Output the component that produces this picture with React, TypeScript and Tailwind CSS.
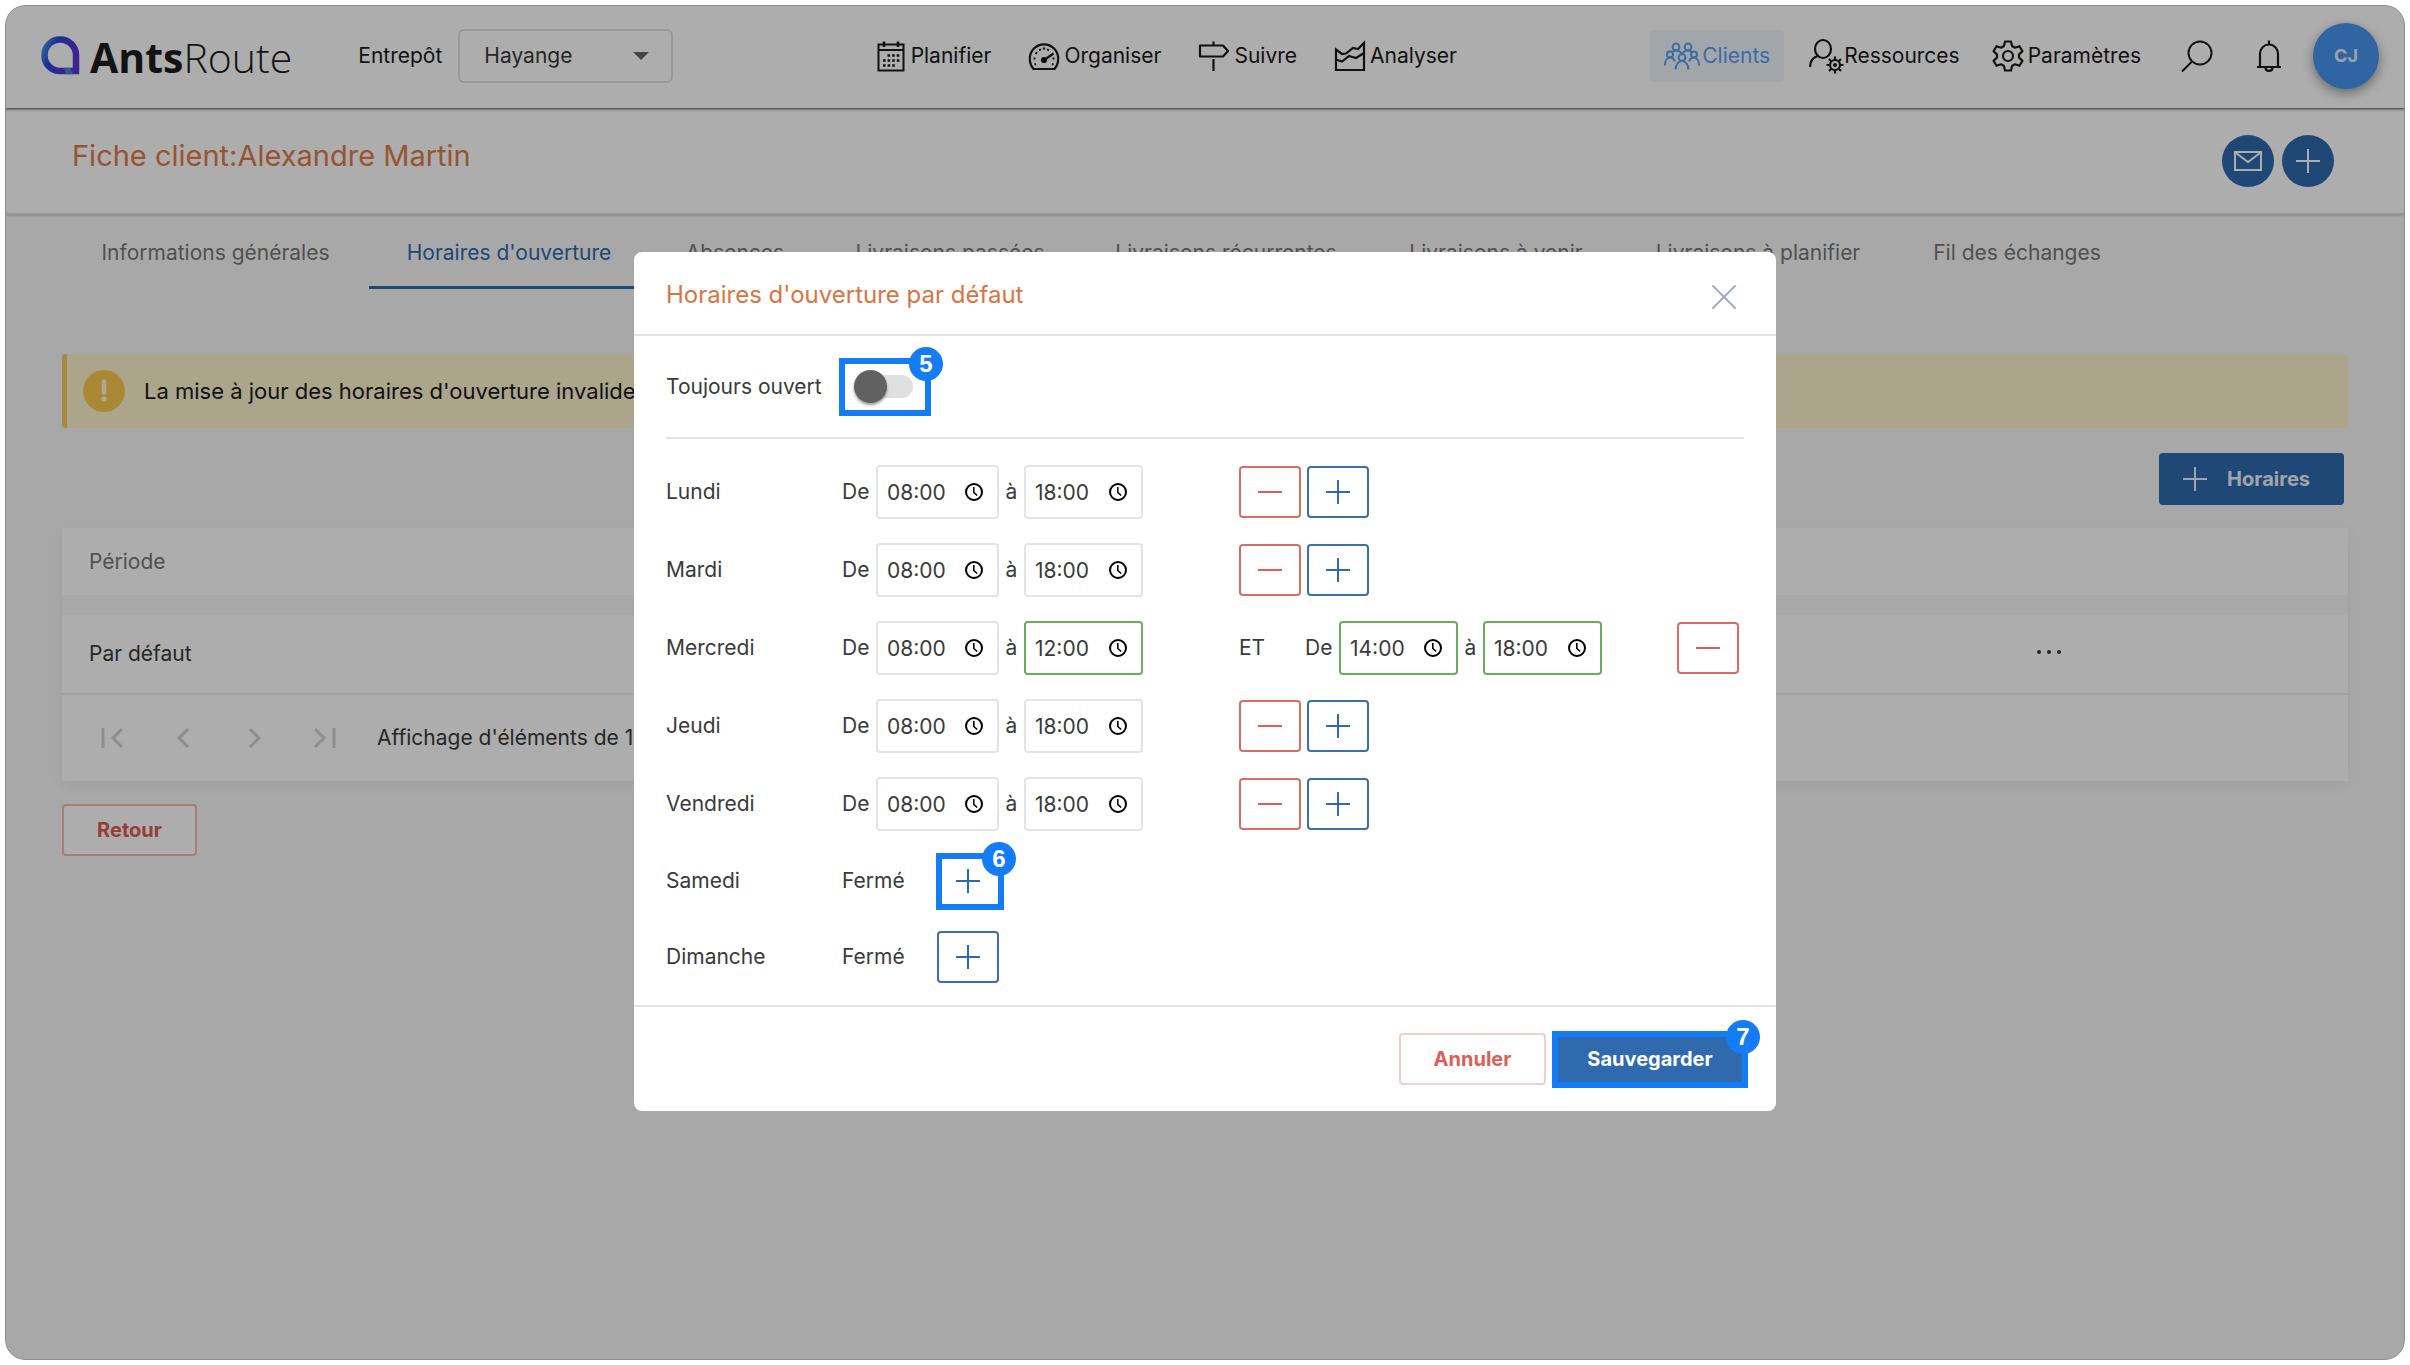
import { useState } from "react";
import type { ReactNode } from "react";
import clsx from "clsx";

type Slot = { from: string; to: string; fromEdited?: boolean; toEdited?: boolean };
type Day = { name: string; slots: Slot[] };

const DEFAULT_DAYS: Day[] = [
  { name: "Lundi", slots: [{ from: "08:00", to: "18:00" }] },
  { name: "Mardi", slots: [{ from: "08:00", to: "18:00" }] },
  {
    name: "Mercredi",
    slots: [
      { from: "08:00", to: "12:00", toEdited: true },
      { from: "14:00", to: "18:00", fromEdited: true, toEdited: true },
    ],
  },
  { name: "Jeudi", slots: [{ from: "08:00", to: "18:00" }] },
  { name: "Vendredi", slots: [{ from: "08:00", to: "18:00" }] },
  { name: "Samedi", slots: [] },
  { name: "Dimanche", slots: [] },
];

const TABS = [
  { label: "Informations générales", width: "w-[307px]" },
  { label: "Horaires d'ouverture", width: "w-[280px]" },
  { label: "Absences", width: "w-[172px]" },
  { label: "Livraisons passées", width: "w-[258px]" },
  { label: "Livraisons récurrentes", width: "w-[294px]" },
  { label: "Livraisons à venir", width: "w-[246px]" },
  { label: "Livraisons à planifier", width: "w-[278px]" },
  { label: "Fil des échanges", width: "w-[240px]" },
];

/* ---------- icons ---------- */

function Svg({ className, box = 32, sw = 2, children }: { className: string; box?: number; sw?: number; children: ReactNode }) {
  return (
    <svg viewBox={`0 0 ${box} ${box}`} className={clsx("shrink-0", className)} fill="none" stroke="currentColor" strokeWidth={sw} aria-hidden="true">
      {children}
    </svg>
  );
}

const PlusIcon = () => <Svg className="size-6" box={24}><path d="M12 0v24M0 12h24" /></Svg>;

const MinusIcon = () => <Svg className="size-6" box={24}><path d="M0 12h24" /></Svg>;

const CalendarIcon = () => (
  <Svg className="size-8">
    <path d="M3.500 4.500h25v26h-25zM3.500 10h25" />
    <path d="M9 1.500v5.500M23 1.500v5.500" strokeWidth="2.600" />
    <path d="M12.500 15.500h12M8 20.500h16.500M8 25.500h12" strokeWidth="2.600" strokeDasharray="2.600 2" />
  </Svg>
);

const GaugeIcon = () => (
  <Svg className="size-8" sw={2.2}>
    <path d="M5.500 29C2.500 25.500 1.800 22 1.800 18.500a14.200 14.200 0 0 1 28.400 0c0 3.500-.700 7-3.700 10.500z" strokeLinejoin="round" />
    <path d="M6.500 24.500 8 24M5.500 18.500h2M7.500 12.500l1.600 1M11.500 9l1 1.600M16 7.500v2M20.500 9l-1 1.600M26.500 18.500h-2M25.500 24.500 24 24" />
    <path d="m16 20 9.500-6.500" strokeWidth="2.400" />
    <circle cx="16" cy="20" r="2" fill="currentColor" />
  </Svg>
);

const SignIcon = () => (
  <Svg className="size-8" sw={2.2}>
    <path d="M2 5.500h23l5 5.500-5 5.500H2zM15.500 1.500v4M15.500 19V31" strokeLinejoin="round" />
  </Svg>
);

// stacked area chart: an upper line closing the frame and a second one across it
const ChartIcon = () => (
  <Svg className="size-8" sw={2.2}>
    <path d="M2 9.500V30h28V3l-6 6-5-1-7 5.500-4 .500zM2 19.500l6 2 7-5.500 7 2 8-5" />
  </Svg>
);

const ClientsIcon = () => (
  <svg viewBox="0 0 36 28" className="h-7 w-9 shrink-0" fill="none" stroke="currentColor" strokeWidth="2" aria-hidden="true">
    <circle cx="12" cy="5" r="3.400" />
    <circle cx="24" cy="5" r="3.400" />
    <circle cx="6" cy="12.500" r="3" />
    <circle cx="30" cy="12.500" r="3" />
    <circle cx="18" cy="15.500" r="3.400" />
    <path d="M8 10c1-1 2.500-1.600 4-1.600 3 0 5 1.800 6 3.600 1-1.800 3-3.600 6-3.600 1.500 0 3 .600 4 1.600M1 23.500c0-4.500 2-8 5-8 2.500 0 4 1.500 5 4M35 23.500c0-4.500-2-8-5-8-2.500 0-4 1.500-5 4M11.500 27.500c.500-5 3-8.500 6.500-8.500s6 3.500 6.500 8.500" />
  </svg>
);

const ResourcesIcon = () => (
  <Svg className="size-9" box={36} sw={2.2}>
    <ellipse cx="15" cy="11" rx="8" ry="9" />
    <path d="M2 29c0-6 3-10 9-11.500" />
    <circle cx="27" cy="27" r="5" />
    <circle cx="27" cy="27" r="1" />
    <path d="M27 18.500V22M27 32v3.500M18.500 27H22M32 27h3.500M21 21l2.500 2.500M30.500 30.500 33 33M33 21l-2.500 2.500M23.500 30.500 21 33" />
  </Svg>
);

const GearIcon = () => (
  <Svg className="size-8" sw={2.2}>
    <circle cx="16" cy="16" r="5" />
    <path d="M13 1.500h6l1 4.500 3 1.700 4.500-1.500 3 5-3.500 3.200v3.200l3.500 3.200-3 5-4.500-1.500-3 1.700-1 4.500h-6l-1-4.500-3-1.700-4.500 1.500-3-5L5 17.600v-3.200L1.500 11.200l3-5L9 7.700 12 6z" strokeLinejoin="round" />
  </Svg>
);

const SearchIcon = () => (
  <Svg className="size-8"><circle cx="19" cy="13" r="11.500" /><path d="M11 21.500 1 31.500" /></Svg>
);

const BellIcon = () => (
  <Svg className="size-8" sw={2.2}>
    <path d="M4 27h24M7 27V14c0-5.500 4-9.500 9-9.500s9 4 9 9.500v13M16 .500v4M12.500 27.500c0 2 1.500 3.400 3.500 3.400s3.500-1.400 3.500-3.400" />
  </Svg>
);

const MailIcon = () => (
  <svg viewBox="0 0 28 20" className="h-5 w-7" fill="none" stroke="currentColor" strokeWidth="2" aria-hidden="true">
    <path d="M1 1h26v18H1zM2 2l12 9L26 2" />
  </svg>
);

const ClockIcon = () => (
  <svg viewBox="0 0 18 18" className="pointer-events-none absolute right-4 size-[18px] text-black" fill="none" stroke="currentColor" strokeWidth="2" aria-hidden="true">
    <circle cx="9" cy="9" r="8" />
    <path d="M8.800 4v5.500l3.400 3" strokeWidth="1.600" />
  </svg>
);

const CloseIcon = () => <Svg className="size-6" box={24}><path d="m1 1 22 22M23 1 1 23" strokeLinecap="round" /></Svg>;

/* ---------- header ---------- */

function Logo() {
  return (
    <a href="#" className="flex items-center gap-[10px]" aria-label="AntsRoute">
      <svg viewBox="0 0 40 40" className="size-10" aria-hidden="true">
        <defs>
          <linearGradient id="ring" x1="0" y1="0" x2="1" y2="0.400">
            <stop offset="0" stopColor="#4a9be8" />
            <stop offset="0.350" stopColor="#2a49d8" />
            <stop offset="1" stopColor="#5a35d6" />
          </linearGradient>
        </defs>
        <path d="M36 35H21A15.500 15.500 0 0 1 4.500 19 15.500 15.500 0 0 1 20 3.500 15.700 15.700 0 0 1 36 19z" fill="none" stroke="url(#ring)" strokeWidth="6.500" />
        <path d="M24 31.800h6l3 6.500H26z" fill="#4a86dc" />
      </svg>
      <span className="pt-[2px] font-['Open_Sans'] text-[41px] leading-[48px] text-[#1c1c1c]">
        <b>Ants</b><span className="font-light">Route</span>
      </span>
    </a>
  );
}

function NavLink({ icon, label, active, className = "gap-1" }: { icon: ReactNode; label: string; active?: boolean; className?: string }) {
  return (
    <a href="#" className={clsx("flex h-[52px] items-center whitespace-nowrap rounded", active && "bg-[#eef5fd] text-[#5aa0f0]", className)}>
      {icon}
      {label}
    </a>
  );
}

function TopBar() {
  return (
    <header className="relative z-10 flex h-[103px] items-center justify-between bg-white pb-[2px] pl-[35px] pr-[26px] text-[#1a1a1a] shadow-[0_1px_3px_rgba(0,0,0,0.7)]">
      <div className="flex items-center">
        <Logo />
        <label htmlFor="depot" className="ml-[66px] mr-4">Entrepôt</label>
        <div className="relative flex items-center">
          <select id="depot" className="h-[54px] w-[215px] appearance-none rounded-md border-2 border-[#e0e0e0] bg-white pl-6 text-[#3a3a3a]">
            <option>Hayange</option>
          </select>
          <svg viewBox="0 0 16 8" className="pointer-events-none absolute right-6 h-2 w-4 text-[#666]" aria-hidden="true">
            <path d="M0 0h16L8 8z" fill="currentColor" />
          </svg>
        </div>
      </div>

      <nav className="flex items-center gap-[37px] pl-2">
        <NavLink icon={<CalendarIcon />} label="Planifier" />
        <NavLink icon={<GaugeIcon />} label="Organiser" />
        <NavLink icon={<SignIcon />} label="Suivre" />
        <NavLink icon={<ChartIcon />} label="Analyser" />
      </nav>

      <div className="flex items-center">
        <NavLink icon={<ClientsIcon />} label="Clients" active className="gap-[2px] px-[14px]" />
        <NavLink icon={<ResourcesIcon />} label="Ressources" className="ml-6" />
        <NavLink icon={<GearIcon />} label="Paramètres" className="ml-8 gap-1" />
        <button type="button" aria-label="Rechercher" className="ml-10"><SearchIcon /></button>
        <button type="button" aria-label="Notifications" className="ml-10"><BellIcon /></button>
        <button type="button" className="ml-7 size-[66px] rounded-full bg-[#4895f0] text-lg font-bold text-[#e4eefa] shadow-[0_4px_12px_rgba(0,0,0,0.4)]">CJ</button>
      </div>
    </header>
  );
}

/* ---------- page ---------- */

function ClientPage() {
  const round = "flex size-[52px] items-center justify-center rounded-full bg-[#2f6aae] text-white";
  const pager = "text-[#d2d2d2]";
  return (
    <>
      <div className="flex h-[106px] items-center justify-between rounded border border-[#e6e6e6] bg-white pl-[66px] pr-[70px] shadow-[0_2px_2px_rgba(0,0,0,0.15)]">
        <h1 className="mb-[10px] text-[29px] leading-9 text-[#e07c47]">Fiche client:Alexandre Martin</h1>
        <div className="flex gap-2">
          <button type="button" aria-label="Envoyer un message" className={round}><MailIcon /></button>
          <button type="button" aria-label="Ajouter" className={round}><PlusIcon /></button>
        </div>
      </div>

      <main className="px-[57px]">
        <div role="tablist" className="flex">
          {TABS.map((tab, i) => (
            <button
              key={tab.label}
              type="button"
              role="tab"
              aria-selected={i === 1}
              className={clsx(
                "h-[75px] whitespace-nowrap border-b-3 pt-[5px] text-center",
                tab.width,
                i === 1 ? "border-[#2f6aae] text-[#2f6aae]" : "border-transparent text-[#777]",
              )}
            >
              {tab.label}
            </button>
          ))}
        </div>

        <div role="alert" className="mt-[65px] flex h-[74px] items-center gap-[19px] rounded border-l-5 border-[#f8c85e] bg-[#fbf3cd] pl-4 text-[22px] text-[#1a1a1a]">
          <svg viewBox="0 0 42 42" className="size-[42px]" aria-hidden="true">
            <circle cx="21" cy="21" r="21" fill="#fdc94f" />
            <path d="M21 11.500v11" stroke="#fff8e0" strokeWidth="4.500" strokeLinecap="round" />
            <circle cx="21" cy="29" r="2.600" fill="#fff8e0" />
          </svg>
          La mise à jour des horaires d'ouverture invalide
        </div>

        <div className="flex justify-end pr-1 pt-[25px]">
          <button type="button" className="flex h-[52px] items-center gap-5 rounded bg-[#2f6aae] pl-6 pr-[34px] text-xl font-bold text-[#eef3fa]">
            <PlusIcon />
            Horaires
          </button>
        </div>

        <div className="mt-[23px] shadow-[0_4px_14px_rgba(0,0,0,0.06)]">
          <table className="w-full border-separate border-spacing-0 text-left">
            <thead>
              <tr className="h-[67px] bg-white">
                <th scope="col" className="pl-[27px] font-normal text-[#777]">Période</th>
                <th scope="col" aria-label="Actions" className="w-[598px]" />
              </tr>
            </thead>
            <tbody>
              <tr className="h-[98px] bg-white">
                <td className="border-t-20 border-[#f8f8f8] pl-[27px] text-[#3a3a3a]">Par défaut</td>
                <td className="border-t-20 border-[#f8f8f8] text-center">
                  <button type="button" aria-label="Actions" className="flex w-full justify-center pb-1 text-[#3a3a3a]">
                    <svg viewBox="0 0 24 4" className="h-1 w-6" aria-hidden="true">
                      <path d="M2 2h.01M12 2h.01M22 2h.01" stroke="currentColor" strokeWidth="4" strokeLinecap="round" />
                    </svg>
                  </button>
                </td>
              </tr>
            </tbody>
          </table>
          <div className="flex h-[88px] items-center border-t-2 border-[#ebebeb] bg-white pl-[38px] text-[#3a3a3a]">
            <button type="button" aria-label="Première page" className={pager}><Svg className="size-6" box={24} sw={3}><path d="M3 2v20M22 3l-9 9 9 9" /></Svg></button>
            <button type="button" aria-label="Page précédente" className={clsx(pager, "ml-[47px]")}><Svg className="size-6" box={24} sw={3}><path d="m17 3-9 9 9 9" /></Svg></button>
            <button type="button" aria-label="Page suivante" className={clsx(pager, "ml-[47px]")}><Svg className="size-6" box={24} sw={3}><path d="m8 3 9 9-9 9" /></Svg></button>
            <button type="button" aria-label="Dernière page" className={clsx(pager, "ml-[47px]")}><Svg className="size-6" box={24} sw={3}><path d="m2 3 9 9-9 9M21 2v20" /></Svg></button>
            <span className="ml-10">Affichage d'éléments de 1</span>
          </div>
        </div>

        <button type="button" className="mt-[23px] h-[52px] w-[135px] rounded border-2 border-[#f3b8b3] bg-white text-xl font-bold text-[#dc5a54]">Retour</button>
      </main>
    </>
  );
}

/* ---------- modal ---------- */

function Callout({ step, children, className }: { step: number; children: ReactNode; className?: string }) {
  return (
    <div className={clsx("relative border-6 border-[#147df5]", className)}>
      {children}
      <span className="absolute -right-[18px] -top-[17px] flex size-[34px] items-center justify-center rounded-full bg-[#147df5] font-['Liberation_Sans'] text-2xl font-bold text-white">
        {step}
      </span>
    </div>
  );
}

function TimeField({ value, label, edited, wide }: { value: string; label: string; edited?: boolean; wide?: boolean }) {
  return (
    <div className={clsx("relative flex items-center", wide ? "w-[123px]" : "w-[119px]")}>
      <input
        type="text"
        inputMode="numeric"
        defaultValue={value}
        aria-label={label}
        className={clsx("h-[54px] w-full rounded border-2 bg-white pl-[9px]", edited ? "border-[#6aad61]" : "border-[#e4e4e4]")}
      />
      <ClockIcon />
    </div>
  );
}

function SlotFields({ slot, day, wide }: { slot: Slot; day: string; wide?: boolean }) {
  return (
    <div className="flex items-center">
      <span className="w-[34px]">De</span>
      <TimeField value={slot.from} label={`${day}, de`} edited={slot.fromEdited} wide={wide} />
      <span className="w-[25px] text-center">à</span>
      <TimeField value={slot.to} label={`${day}, à`} edited={slot.toEdited} />
    </div>
  );
}

function SquareButton({ kind, label }: { kind: "add" | "remove"; label: string }) {
  return (
    <button
      type="button"
      aria-label={label}
      className={clsx(
        "flex h-[52px] w-[62px] items-center justify-center rounded border-2 bg-white",
        kind === "add" ? "border-[#3a6fae] text-[#2f6aae]" : "border-[#d66d66] text-[#d9605a]",
      )}
    >
      {kind === "add" ? <PlusIcon /> : <MinusIcon />}
    </button>
  );
}

function DayRow({ day }: { day: Day }) {
  const [first, second] = day.slots;

  if (!first) {
    return (
      <div className="flex h-[52px] items-center">
        <span className="w-[176px]">{day.name}</span>
        <span className="w-[95px]">Fermé</span>
        {day.name === "Samedi" ? (
          <Callout step={6} className="-my-[2px] -ml-[1px]">
            <button type="button" aria-label="Ajouter un créneau, Samedi" className="flex h-[45px] w-[56px] items-center justify-center bg-white pr-1 text-[#2f6aae]">
              <PlusIcon />
            </button>
          </Callout>
        ) : (
          <SquareButton kind="add" label={`Ajouter un créneau, ${day.name}`} />
        )}
      </div>
    );
  }

  return (
    <div className="flex items-center">
      <span className="w-[176px]">{day.name}</span>
      <div className="w-[397px]"><SlotFields slot={first} day={day.name} wide /></div>
      {second ? (
        <>
          <span className="w-[66px]">ET</span>
          <SlotFields slot={second} day={day.name} />
          <div className="ml-auto mr-[5px]"><SquareButton kind="remove" label={`Retirer un créneau, ${day.name}`} /></div>
        </>
      ) : (
        <div className="flex gap-[6px]">
          <SquareButton kind="remove" label={`Retirer un créneau, ${day.name}`} />
          <SquareButton kind="add" label={`Ajouter un créneau, ${day.name}`} />
        </div>
      )}
    </div>
  );
}

function HoursModal() {
  const [alwaysOpen, setAlwaysOpen] = useState(false);

  return (
    <section role="dialog" aria-labelledby="hours-title" className="w-[1142px] rounded-lg bg-white text-[#3a3a3a]">
      <div className="flex h-[84px] items-center justify-between border-b-2 border-[#e4e4e4] pl-8 pr-10 pt-1">
        <h2 id="hours-title" className="text-2xl text-[#d87543]">Horaires d'ouverture par défaut</h2>
        <button type="button" aria-label="Fermer" className="mt-1 text-[#a3a9c9]"><CloseIcon /></button>
      </div>

      <div className="px-8">
        <div className="flex h-[103px] items-center border-b-2 border-[#e4e4e4]">
          <label htmlFor="always-open" className="w-[173px]">Toujours ouvert</label>
          <Callout step={5}>
            <div className="flex h-[46px] w-20 items-center pl-[9px]">
              <input
                id="always-open"
                type="checkbox"
                role="switch"
                checked={alwaysOpen}
                onChange={(e) => setAlwaysOpen(e.target.checked)}
                className="relative h-[23px] w-[59px] appearance-none rounded-full bg-[#e0e0e0] before:absolute before:left-0 before:-top-[5px] before:size-[33px] before:rounded-full before:bg-[#616161] before:shadow-[0_2px_3px_rgba(0,0,0,0.4)] checked:before:left-[26px]"
              />
            </div>
          </Callout>
        </div>

        <div className="flex flex-col gap-6 pb-[22px] pt-[26px]">
          {DEFAULT_DAYS.map((day) => <DayRow key={day.name} day={day} />)}
        </div>
      </div>

      <div className="flex h-[106px] items-center justify-end gap-[6px] border-t-2 border-[#e4e4e4] pr-[28px] text-xl">
        <button type="button" className="h-[52px] w-[147px] rounded border-2 border-[#f3cfcc] bg-white font-bold text-[#d9605a]">Annuler</button>
        <Callout step={7}>
          <button type="button" className="h-[45px] w-[184px] bg-[#2f6aae] font-bold text-white">Sauvegarder</button>
        </Callout>
      </div>
    </section>
  );
}

export default function App() {
  return (
    <div className="min-h-screen bg-white p-[5px] font-['Inter',sans-serif] text-[21px]">
      <div className="relative min-h-[calc(100vh-10px)] overflow-hidden rounded-[20px] bg-[#f8f8f8]">
        <TopBar />
        <ClientPage />
        <div className="absolute inset-0 z-20 flex items-start justify-center rounded-[20px] border border-[#8c8c8c] bg-black/32 pt-[246px]">
          <HoursModal />
        </div>
      </div>
    </div>
  );
}
